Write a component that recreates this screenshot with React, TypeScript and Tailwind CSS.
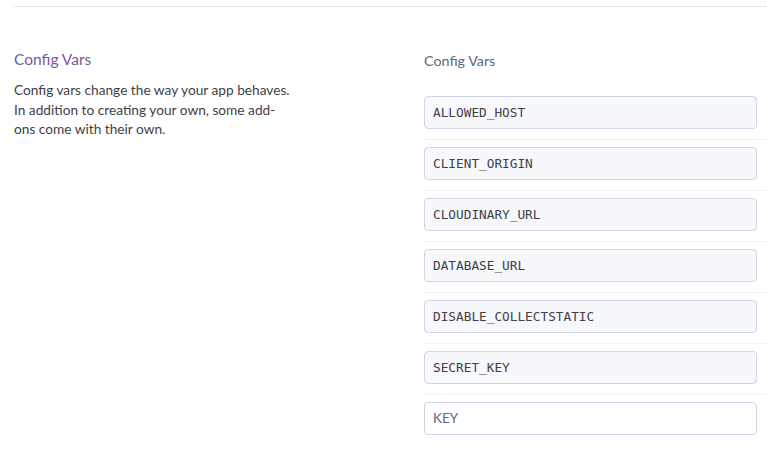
const vars = [
  'ALLOWED_HOST',
  'CLIENT_ORIGIN',
  'CLOUDINARY_URL',
  'DATABASE_URL',
  'DISABLE_COLLECTSTATIC',
  'SECRET_KEY',
];

const sans = "font-['Lato','Open_Sans',sans-serif]";

export default function App() {
  return (
    <div className={`min-h-[454px] w-[767px] bg-white pl-[14px] ${sans}`}>
      <div className="pt-[6px]">
        <div className="h-px bg-[#e6e9f0]" />
      </div>
      <div className="flex">
        <div className="w-[410px] shrink-0 pt-[42px]">
          <h2 className="text-[15.5px] leading-[20px] text-[#79589f]">Config Vars</h2>
          <p className="mt-[11px] w-[278px] text-[13.7px] leading-[19.5px] text-[#3f3f44]">
            Config vars change the way your app behaves. In addition to creating your own, some add-ons come with
            their own.
          </p>
        </div>
        <div className="flex-1 pt-[44px]">
          <div className="text-[14.3px] leading-[20px] text-[#596981]">Config Vars</div>
          <div className="mt-[25px]">
            {vars.map((name) => (
              <div key={name} className="mb-[7px] border-b border-[#eef1f6] pb-[10px] last:mb-[8px]">
                <div className="mr-[10px] flex h-[33px] items-center rounded-[4px] border border-[#cfd7e6] bg-[#f7f8fb] px-[8px] font-['DejaVu_Sans_Mono',monospace] text-[12.75px] text-[#3f3f44]">
                  {name}
                </div>
              </div>
            ))}
            <div className="mr-[10px] flex h-[33px] items-center rounded-[4px] border border-[#cfd7e6] bg-white px-[8px] text-[13.5px] text-[#596981]">
              KEY
            </div>
          </div>
        </div>
      </div>
    </div>
  );
}
